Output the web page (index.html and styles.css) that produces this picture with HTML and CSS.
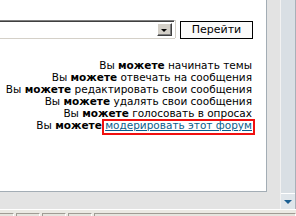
FILE: index.html
```html
<!DOCTYPE html>
<html>
<head>
<meta charset="utf-8">
<link rel="stylesheet" href="styles.css">
</head>
<body>
<div class="window">
  <div class="top">
    <div class="pane">
      <div class="content">
        <div class="jump">
          <div class="select">
            <div class="select-arrow"><span class="tri"></span></div>
          </div>
          <div class="btn">Перейти</div>
        </div>
        <div class="perms">
          <div>Вы <b>можете</b> начинать темы</div>
          <div>Вы <b>можете</b> отвечать на сообщения</div>
          <div>Вы <b>можете</b> редактировать свои сообщения</div>
          <div>Вы <b>можете</b> удалять свои сообщения</div>
          <div>Вы <b>можете</b> голосовать в опросах</div>
          <div>Вы <b>можете</b> <a class="mod" href="#">модерировать этот форум</a></div>
        </div>
      </div>
    </div>
    <div class="gutter"></div>
    <div class="scrollbar">
      <div class="track"></div>
      <div class="sb-btn"><span class="sb-tri"></span></div>
    </div>
  </div>
  <div class="status">
    <div class="panel p1"></div>
    <div class="panel"></div>
    <div class="panel"></div>
    <div class="panel"></div>
    <div class="panel wide"></div>
  </div>
</div>
</body>
</html>
```

FILE: styles.css
```css
html, body {
  margin: 0;
  padding: 0;
  width: 296px;
  height: 216px;
  overflow: hidden;
  background: #e3e3e3;
  font-family: "DejaVu Sans", Verdana, sans-serif;
}
.window {
  display: flex;
  flex-direction: column;
  width: 296px;
  height: 216px;
}
.top {
  display: flex;
  height: 209px;
  background: #e3e3e3;
}
.pane {
  width: 267px;
}
.content {
  box-sizing: border-box;
  width: 267px;
  height: 192px;
  background: #fff;
  border-right: 1px solid #a3adb5;
  border-bottom: 1px solid #a3adb5;
  overflow: hidden;
  padding-top: 20px;
}
.gutter {
  width: 13px;
}
.jump {
  display: flex;
  justify-content: flex-end;
  align-items: flex-start;
  gap: 5px;
  padding-right: 13px;
}
.select {
  box-sizing: border-box;
  flex: none;
  width: 220px;
  height: 18px;
  background: #fff;
  border-top: 1px solid #808080;
  border-left: 1px solid #808080;
  border-right: 1px solid #fff;
  border-bottom: 1px solid #fff;
  box-shadow: inset 1px 1px 0 #404040, 0 1px 0 #d4d0c8, 1px 0 0 #d4d0c8;
  display: flex;
  justify-content: flex-end;
  padding: 2px 2px 1px 0;
}
.select-arrow {
  box-sizing: border-box;
  width: 15px;
  height: 13px;
  background: #d4d0c8;
  border-top: 1px solid #fff;
  border-left: 1px solid #fff;
  border-right: 1px solid #404040;
  border-bottom: 1px solid #404040;
  box-shadow: inset -1px -1px 0 #808080;
  display: flex;
  align-items: center;
  justify-content: center;
}
.tri {
  width: 0;
  height: 0;
  border-left: 3px solid transparent;
  border-right: 3px solid transparent;
  border-top: 3px solid #000;
  margin: 1px 1px 0 0;
}
.btn {
  box-sizing: border-box;
  flex: none;
  width: 73px;
  height: 18px;
  margin-top: 1px;
  border: 1px solid #000;
  background: #fbfbfb;
  font-size: 11px;
  line-height: 16px;
  text-align: center;
  color: #000;
}
.perms {
  margin-top: 20px;
  padding-right: 14px;
  text-align: right;
  font-size: 10.5px;
  line-height: 12px;
  color: #000;
  white-space: nowrap;
}
.perms b {
  font-weight: bold;
}
.mod {
  position: relative;
  color: #0a5d8c;
  text-decoration: underline;
}
.mod::after {
  content: "";
  position: absolute;
  left: -3px;
  right: -3px;
  top: 0;
  bottom: -4px;
  border: 2px solid #f01010;
}
.scrollbar {
  box-sizing: border-box;
  width: 16px;
  height: 209px;
  display: flex;
  flex-direction: column;
  background: #d9dfe4;
  border-left: 1px solid #f2f2f2;
  border-right: 1px solid #a8b0b8;
}
.track {
  flex: 1;
}
.sb-btn {
  box-sizing: border-box;
  height: 16px;
  border-top: 1px solid #fff;
  background: #dfe5ea;
  display: flex;
  align-items: center;
  justify-content: center;
}
.sb-tri {
  width: 0;
  height: 0;
  border-left: 4px solid transparent;
  border-right: 4px solid transparent;
  border-top: 4px solid #1b5f92;
}
.status {
  display: flex;
  height: 7px;
  border-top: 1px solid #fff;
  background: #ebe9e3;
  padding-top: 3px;
  box-sizing: border-box;
  gap: 2px;
}
.panel {
  width: 22px;
  border-top: 1px solid #a09c94;
  border-left: 1px solid #a09c94;
  border-right: 1px solid #fff;
  background: #e6e4de;
}
.panel.p1 {
  width: 13px;
  border-left: none;
}
.panel.wide {
  flex: 1;
}
```
